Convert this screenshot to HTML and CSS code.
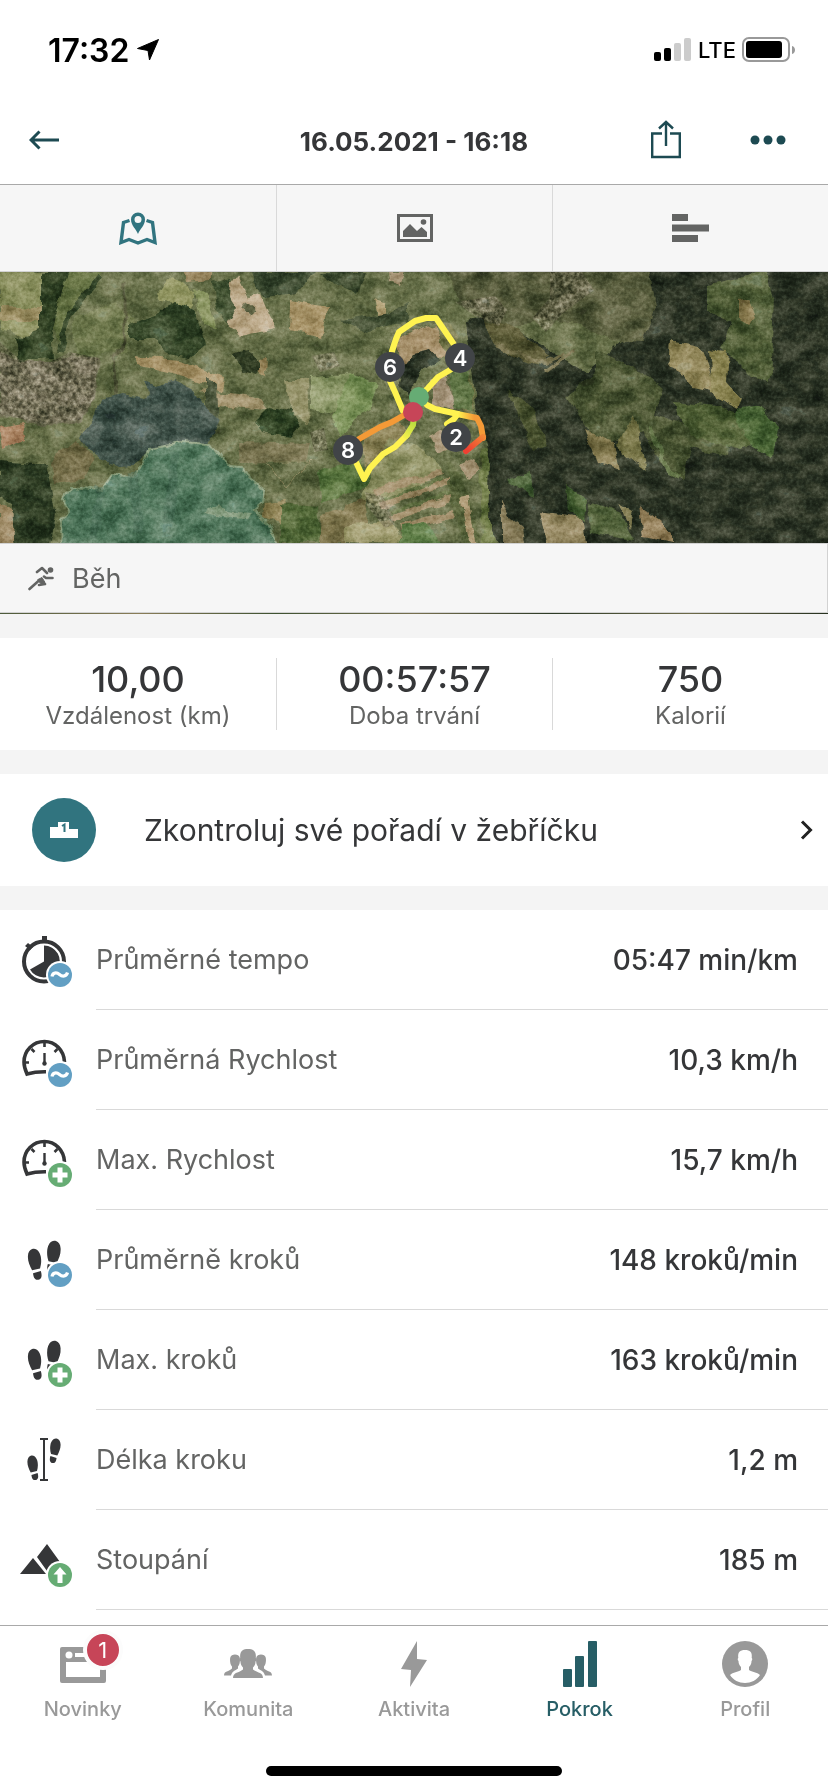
FILE: index.html
```html
<!DOCTYPE html>
<html lang="cs">
<head>
    <meta charset="UTF-8">
    <meta name="viewport" content="width=device-width, initial-scale=1.0">
    <title>16.05.2021 - 16:18</title>
    <link rel="stylesheet" href="styles.css">
</head>
<body>

    <!-- Shared icon parts -->
    <svg class="defs" aria-hidden="true">
        <symbol id="badge-avg" viewBox="0 0 28 28">
            <circle cx="14" cy="14" r="14" fill="#fff"/>
            <circle cx="14" cy="14" r="12" fill="#629fc3"/>
            <path d="M6 15.500c.6-4 4.500-4.500 7.500-2s7 2 8-2" fill="none" stroke="#fff" stroke-width="3.200"/>
        </symbol>
        <symbol id="badge-max" viewBox="0 0 28 28">
            <circle cx="14" cy="14" r="14" fill="#fff"/>
            <circle cx="14" cy="14" r="12" fill="#66ac74"/>
            <path d="M14 6.500v15M6.500 14h15" stroke="#fff" stroke-width="5"/>
        </symbol>
        <symbol id="badge-up" viewBox="0 0 28 28">
            <circle cx="14" cy="14" r="14" fill="#fff"/>
            <circle cx="14" cy="14" r="12" fill="#66ac74"/>
            <path d="M14 6l6.500 7.500h-4V22h-5v-8.500h-4z" fill="#fff"/>
        </symbol>
        <symbol id="gauge" viewBox="0 0 52 52">
            <path d="M44.500 26C44 14 35 5.500 24.500 5.500 13 5.500 4 14.500 4 26c0 4 1 7.500 3 12 6-1.700 12-2.300 19-2.200" transform="translate(0 2)" fill="none" stroke="#353638" stroke-width="3.600"/>
            <path d="M24.500 8v5M11.500 15l3 3M37.500 15l-3 3M5 28.500h4" stroke="#353638" stroke-width="2.600"/>
            <path d="M24.500 19v11" stroke="#353638" stroke-width="2.400"/>
            <circle cx="24.500" cy="29.500" r="2.200" fill="#353638"/>
        </symbol>
        <symbol id="foot" viewBox="0 0 16 34">
            <path d="M5 1c5-1.500 8 3 9 8 .8 5 .2 8.500-.8 12L5 23C2.500 18 .5 14 .7 8.500.8 4.500 2.500 1.800 5 1zM6 26l8-2.300c1.500 4.500 1 8.300-2.500 9C7.500 33.400 6.300 29.500 6 26z" fill="#353638"/>
        </symbol>
        <symbol id="steps" viewBox="0 0 52 52">
            <use href="#foot" x="7" y="14" width="16" height="33"/>
            <g transform="translate(49 5.500) scale(-1 1) rotate(2)"><use href="#foot" x="8" y="0" width="16" height="34"/></g>
        </symbol>
    </svg>

    <!-- Status bar -->
    <div class="status-bar">
        <div class="clock">
            17:32
            <svg width="22" height="22" viewBox="0 0 22 22"><path d="M21.500.5L12.500 21l-1.500-9.500L.5 9.500z" stroke="#000" stroke-linejoin="round"/></svg>
        </div>
        <div class="signal">
            <svg width="38" height="24" viewBox="0 0 38 24">
                <rect x="0" y="14" width="7" height="9" rx="2"/>
                <rect x="10" y="10" width="7" height="13" rx="2"/>
                <rect x="20" y="5" width="7" height="18" rx="2" fill="#ccc"/>
                <rect x="30" y="0" width="7" height="23" rx="2" fill="#ccc"/>
            </svg>
            LTE
            <svg width="54" height="26" viewBox="0 0 54 26">
                <rect x="1" y="1" width="46" height="23" rx="6" fill="none" stroke="#999" stroke-width="2"/>
                <rect x="4" y="4" width="36" height="17" rx="3"/>
                <path d="M50 9c4 1 4 7 0 8z" fill="#999"/>
            </svg>
        </div>
    </div>

    <header class="header">
        <button class="icon-button" aria-label="Zpět">
            <svg width="30" height="20" viewBox="0 0 30 20" fill="none" stroke="#1d4a52" stroke-width="3"><path d="M30 10H2M10.500 1.500L2 10l8.500 8.500"/></svg>
        </button>
        <h1>16.05.2021 - 16:18</h1>
        <div class="header-actions">
            <button class="icon-button" aria-label="Sdílet">
                <svg width="30" height="39" viewBox="0 0 30 39" fill="none" stroke="#1d4a52" stroke-width="2.400"><path d="M11 13.500H1.200V37h27.600V13.500H19"/><path d="M15 26V2M8 8.500L15 2l7 6.500"/></svg>
            </button>
            <button class="icon-button" aria-label="Více">
                <svg width="36" height="10" viewBox="0 0 36 10" fill="#1d4a52"><circle cx="5" cy="5" r="4.500"/><circle cx="18" cy="5" r="4.500"/><circle cx="31" cy="5" r="4.500"/></svg>
            </button>
        </div>
    </header>

    <nav class="view-tabs">
        <button aria-label="Mapa">
            <svg width="38" height="33" viewBox="0 0 38 33">
                <path d="M10.500 8.500L4.500 10.500 2 30.500l8-3 9 3.500 9-3.500 8 3L33.500 10.500l-6-2" fill="none" stroke="#31747f" stroke-width="3.400"/>
                <path d="M19 22c-1.800-5-7-8.500-7-14.500a7 7 0 0 1 14 0C26 13.500 20.800 17 19 22zM19 4a3.500 3.500 0 1 0 0 7 3.500 3.500 0 0 0 0-7z" fill="#31747f" fill-rule="evenodd"/>
            </svg>
        </button>
        <button aria-label="Fotografie">
            <svg width="36" height="28" viewBox="0 0 36 28">
                <rect x="1.500" y="1.500" width="33" height="25" fill="none" stroke="#636463" stroke-width="3"/>
                <path d="M6 23v-6l7-7 7 7 4.500-4 5.500 5v5z" fill="#636463"/>
                <circle cx="26.500" cy="8" r="2.800" fill="#636463"/>
            </svg>
        </button>
        <button aria-label="Grafy">
            <svg width="37" height="28" viewBox="0 0 37 28" fill="#636463"><path d="M0 0h16v7H0zM0 10.500h37v7H0zM0 21h26v7H0z"/></svg>
        </button>
    </nav>

    <!-- Satellite map with the route -->
    <svg class="map" viewBox="0 0 828 271" preserveAspectRatio="xMidYMid slice" role="img" aria-label="Mapa trasy">
        <defs>
            <filter id="terrain" x="0" y="0" width="100%" height="100%" color-interpolation-filters="sRGB">
                <feTurbulence type="fractalNoise" baseFrequency="0.06" numOctaves="3" seed="4" result="warp"/>
                <feDisplacementMap in="SourceGraphic" in2="warp" scale="9" xChannelSelector="R" yChannelSelector="G"/>
            </filter>
            <filter id="patches" x="0" y="0" width="100%" height="100%" color-interpolation-filters="sRGB">
                <feTurbulence type="fractalNoise" baseFrequency="0.04 0.06" numOctaves="5" seed="11"/>
                <feColorMatrix values="0 1.800 0 0 -.33  0 1.600 0 0 -.25  0 1.600 0 0 -.31  0 0 0 0 1"/>
            </filter>
            <filter id="grain" x="0" y="0" width="100%" height="100%" color-interpolation-filters="sRGB">
                <feTurbulence type="fractalNoise" baseFrequency="0.3" numOctaves="3" seed="2"/>
                <feColorMatrix values="0 1.200 0 0 -.1  0 1.200 0 0 -.1  0 1.200 0 0 -.1  0 0 0 0 1"/>
            </filter>
            <filter id="town" x="0" y="0" width="100%" height="100%" color-interpolation-filters="sRGB">
                <feTurbulence type="fractalNoise" baseFrequency="0.22" numOctaves="3" seed="8"/>
                <feColorMatrix values="0 2 0 0 -.56  0 1.900 0 0 -.54  0 1.800 0 0 -.54  0 0 0 0 1" result="n"/>
                <feComposite in="n" in2="SourceGraphic" operator="in"/>
            </filter>
            <linearGradient id="toOrange" gradientUnits="userSpaceOnUse" x1="458" y1="0" x2="474" y2="0"><stop offset="0" stop-color="#fff350"/><stop offset="1" stop-color="#f49a37"/></linearGradient>
            <linearGradient id="toRed" gradientUnits="userSpaceOnUse" x1="483" y1="162" x2="468" y2="178"><stop offset="0" stop-color="#f28a36"/><stop offset="1" stop-color="#ee4032"/></linearGradient>
            <linearGradient id="toLime" gradientUnits="userSpaceOnUse" x1="402" y1="168" x2="414" y2="150"><stop offset="0" stop-color="#fff350"/><stop offset="1" stop-color="#b9dc3f"/></linearGradient>
        </defs>

        <g filter="url(#terrain)">
            <rect x="-20" y="-20" width="880" height="320" fill="#636d4a"/>

            <!-- western fields and woods -->
            <path d="M0 0h45l-3 60-12 5-30-8z" fill="#858c5e"/>
            <path d="M0 35h40v14H0z" fill="#9a8e66"/>
            <path d="M65 0h38L70 45 60 75 52 55z" fill="#68764a"/>
            <path d="M100 5L68 42 60 80" fill="none" stroke="#33452b" stroke-width="6"/>
            <path d="M40 0h28l-8 30-8 25 2 32-36 2-3-22 25-8z" fill="#2b3d23"/>
            <path d="M75 45l40-15 20 20-10 30-50 5z" fill="#6c774f"/>
            <path d="M125 10v60l-12 15 4 40" fill="none" stroke="#55593f" stroke-width="3"/>
            <path d="M158 22l12-17 12 5 13 12-3 16-30-10z" fill="#8f9464"/>
            <path d="M183 0h28v8l-26 2z" fill="#9b8966"/>
            <path d="M155 42l20-12 20 8 10 34-15 13-27-5-10-14h-23V52z" fill="#2e4127"/>
            <path d="M195 18l12 2 10 38-14-6z" fill="#83905f"/>
            <path d="M213 10l16-5 2 22 7 10-10 18-12-20z" fill="#3a4c30"/>
            <path d="M230 8l9-2 9 20 12-4 15 34-35 7-13-10 10-17-8-12z" fill="#b8a689"/>
            <path d="M244 32l10 9" stroke="#5f6549" stroke-width="7"/>
            <path d="M252 0h65l-22 22-30 4-10-12z" fill="#364630"/>
            <path d="M290 29l38 6-6 31-33-8z" fill="#a8956e"/>
            <path d="M320 0h45l-8 22-24-12z" fill="#38472f"/>
            <path d="M374 27l12 4v16l-8-4z" fill="#af9f78"/>
            <path d="M388 0h18l-5 14-12-4z" fill="#a6957a"/>
            <path d="M340 48l45-6 22-10v18l-40 10z" fill="#404e36"/>
            <path d="M232 82l18-4 10 17-4 8-16-5z" fill="#2b3823"/>
            <path d="M258 86l8-1-1 20-7-3z" fill="#98865f"/>
            <path d="M135 84l45 4 45 17-2 14-40-14-46-12z" fill="#a28f68"/>
            <path d="M200 118l60 8 8 12-50-4z" fill="#9c8f6d"/>
            <path d="M205 105l12 8 2 45-14-24z" fill="#44503a"/>
            <path d="M310 105l40-5 20 18-30 25-30-5z" fill="#8d996e"/>
            <path d="M350 100l28 12-8 24-30 28-8-18z" fill="#7c935e"/>
            <path d="M285 108h22l2 44-18-10z" fill="#8d8c66"/>
            <path d="M255 150l15-15 20 3 11 16-11 12-28-5z" fill="#263a20"/>
            <path d="M240 170l72 2-4 17-66 2z" fill="#7a7656"/>
            <path d="M268 190h44M266 190l20 26 28-30" fill="none" stroke="#8f8a66" stroke-width="1"/>
            <path d="M318 200l44-12 10 26-50 16z" fill="#567340"/>
            <path d="M362 160l36-12 12 14-44 32z" fill="#8c845c"/>
            <path d="M264 230l24-2-8 24-18-6z" fill="#8b8056"/>
            <path d="M280 232l38 3 4 36h-42z" fill="#4b6336"/>
            <path d="M322 245l42-20 8 46h-52z" fill="#7f7752"/>
            <path d="M345 254l45-6 15 23h-60z" fill="#96946a"/>

            <!-- lakes -->
            <path d="M145 108l10 5 20-5 20 10 10 17 15 13-7 17-7 7-50 2-12 11-12 9-14 1-16-8-18-14-4-8 14-16 7-22 23-5 22 5 3-8z" fill="#40534e"/>
            <path d="M150 176l30-6 30 2 10 13 9 10 14 1 8 13 13 9-2 12-10 9 15 12 20 40H62l-1-41 7-10-5-14 8-11 30 3 12-16 20 4 10-14z" fill="#4e765f" stroke="#869b7e" stroke-width="2"/>
            <path d="M132 200l8 60M175 180l-8 85M100 215l-5 50" stroke="#456a59" stroke-width="9" opacity=".5"/>
            <path d="M205 242l15-10 6 8 26 2-4 6-26-2z" fill="#7b957a"/>

            <path d="M0 154l24-4 3 18-24 10z" fill="#a47e60"/>
            <path d="M0 188l46 4 6 30 4 22-8 40H14l-2-53-12-6z" fill="#273722"/>
            <path d="M0 232l12 3 3 46H0z" fill="#93805e"/>
            <path d="M50 190l26-22 20 18-12 20-30 4z" fill="#746e4d"/>
            <path d="M0 80l25 10 28 0 20-8 26 4-4 42-14 22-36 4-45-10z" fill="#6a6a53"/>

            <!-- fields under the route -->
            <path d="M398 66l38-14 12 35-16-4-14 8-18 4z" fill="#a38e6c"/>
            <path d="M436 46l14 6 22 60 6 50-14-20-16-50z" fill="#75784f"/>
            <path d="M402 98l12-16 18-4 8 10-22 14-10 20-10-8z" fill="#283226"/>
            <path d="M432 108l14-10 8 40-22-5z" fill="#a69680"/>
            <path d="M448 92l20 4 6 44-20-3z" fill="#60764a"/>
            <path d="M388 166l30 8 26 24-60 38-24-10z" fill="#8a8e64"/>
            <path d="M430 164l12-6 8 18-10 6zM458 194l14-8 8 12-12 10z" fill="#a59479"/>
            <path d="M375 220l68-20M380 234l70-26M392 246l66-22M400 256l60-16" stroke="#a08e6e" stroke-width="7"/>
            <path d="M384 228l60-22M392 240l60-20" stroke="#66754a" stroke-width="3"/>
            <path d="M402 254l22-4 28 31h-54z" fill="#587946"/>
            <path d="M448 185l16 28 20 68h-16l-18-54z" fill="#5c6842"/>
            <path d="M464 225l10 56" stroke="#b09d7c" stroke-width="6"/>
            <path d="M480 175l10 2 6 104h-14z" fill="#6c7a49"/>

            <!-- eastern forest -->
            <path d="M466 50l30-4 40 24 50 30 60-50 4-70h190v310H506l-18-40 2-60-14-60z" fill="#293226"/>
            <path d="M440-10l104 0 104 0 8 45-12 36-32-2-30-16-40-6-40 10-36-20z" fill="#53593d"/>
            <path d="M485 48l30 8 34 28-4 10-24-6-30-18z" fill="#535434"/>
            <path d="M495 72l50 20 20-12M545 100l30-22" fill="none" stroke="#6d6a4a" stroke-width="4"/>
            <path d="M596 78l46 22 20 16-6 26 24 8 50 10-2 24-38-8-6 32-20-16-22-32-34 12-20-14-20-34 28-24z" fill="#465233"/>
            <path d="M508 116l28 22 10 36-12 4-16-34z" fill="#434d2e"/>
            <path d="M708 12l40-8 18-8 8 30-4 84-18-4-20-20-10-10 10-28-24-8z" fill="#4a5936"/>
            <path d="M738 28l10-2 8 20-8 8-10-6z" fill="#857850"/>
            <path d="M670 70l30 6 12 32v12l-18-4-12-14-14-8z" fill="#877e54"/>
            <path d="M708 78l20 2-2 30 16 18-4 8-26-14z" fill="#827d4e"/>
            <path d="M672 130l46 4 22 6 20 30-20 8-50-14z" fill="#4b5c35"/>
            <path d="M738 136l22-4 16 24-4 30-20-12-16-24z" fill="#4b673a"/>
            <path d="M584 156l30 16 6 26-22-8z" fill="#827952"/>
            <path d="M634 142l12 56-30-24z" fill="#77764c"/>
            <path d="M650 156l18 42 12 6" fill="none" stroke="#60734a" stroke-width="4"/>
            <path d="M506 208l26-8 2 26z" fill="#405a34"/>
            <path d="M566 212l22 16-2 22-18-10z" fill="#3f5930"/>
            <path d="M590 230l30 10 14 28-42-6z" fill="#4a5c38"/>
            <path d="M502 226l8 18 14 12 4 25h-26z" fill="#857b5c"/>
            <path d="M540 240l42 6 6 35h-40z" fill="#918562"/>
            <path d="M618 230l16 10-4 16z" fill="#85805a"/>
            <path d="M640 235l32 24v12l-28-6z" fill="#907d5b"/>
        </g>

        <!-- built-up areas -->
        <g filter="url(#town)" opacity=".35">
            <path d="M0 70l20 18 30 2 20-10 28 6-4 40-14 22-36 4-44-10z"/>
            <path d="M550 0h32l12 18-32 24-16 18-14-14 18-20z"/>
            <path d="M455 30l40-6 12 14-8 16-24-10zM312 84l22-4 6 14-20 6zM310 160l14-4 4 22-14 2zM365 220l18 4 12 28-10 4-18-22z"/>
        </g>

        <rect class="map-patches" width="828" height="271" filter="url(#patches)"/>
        <rect class="map-grain" width="828" height="271" filter="url(#grain)"/>

        <g class="route">
            <path d="M419 125l8 8 8 4 23 5M457 143l-3 4-7 5"/>
            <path d="M419 125l9-9 10-11 12-7 10-12-7-15-17-25h-10l-11 3-16 11-3 7-4 12-2 16v14l5 11 8 19"/>
            <path d="M348 178l7 10 9 19 6-11 13-14 12-7 12-12"/>
            <path d="M406 164l7-11 1-8" stroke="url(#toLime)"/>
            <path d="M406 142l-14 8-12 5-21 12-9 9" stroke="#f49a37"/>
            <path d="M457 142l20 4 4 8 2 12" stroke="url(#toOrange)"/>
            <path d="M483 165l-17 14" stroke="url(#toRed)"/>
        </g>
        <circle cx="419" cy="125" r="10" fill="#66ac74"/>
        <circle cx="413" cy="140" r="10" fill="#c74558"/>
        <g fill="#414447">
            <circle cx="456" cy="165" r="15"/>
            <circle cx="460" cy="86" r="15"/>
            <circle cx="390" cy="95" r="15"/>
            <circle cx="348" cy="178" r="15"/>
        </g>
        <g class="km-label">
            <text x="456" y="173">2</text>
            <text x="460" y="94">4</text>
            <text x="390" y="103">6</text>
            <text x="348" y="186">8</text>
        </g>
    </svg>

    <div class="sport">
        <svg width="26" height="25" viewBox="0 0 26 25" fill="none" stroke="#636463" stroke-width="2.600" stroke-linecap="round" stroke-linejoin="round">
            <circle cx="22.500" cy="4" r="2.800" fill="#636463" stroke="none"/>
            <path d="M9 6l5-4 5 5M16 10.500l2 1.500h6.500M1.500 23L11 14.500l6 3.500-6 1"/>
            <path d="M10 13.500l4-2 3 5-4 1z" fill="#636463" stroke-width="1"/>
        </svg>
        <span>Běh</span>
    </div>
    <div class="map-edge"></div>

    <section class="summary">
        <div class="summary-item"><strong>10,00</strong><span>Vzdálenost (km)</span></div>
        <div class="summary-item"><strong>00:57:57</strong><span>Doba trvání</span></div>
        <div class="summary-item"><strong>750</strong><span>Kalorií</span></div>
    </section>

    <a href="#" class="leaderboard">
        <svg width="64" height="64" viewBox="0 0 64 64">
            <circle cx="32" cy="32" r="32" fill="#31747f"/>
            <path d="M18 29h8v-5h11v7h9v9H18z" fill="#fff"/>
            <path d="M30 28l2.500-1.500V34" fill="none" stroke="#31747f" stroke-width="2"/>
        </svg>
        <span>Zkontroluj své pořadí v žebříčku</span>
        <svg width="13" height="20" viewBox="0 0 13 20" fill="none" stroke="#222" stroke-width="3"><path d="M2 1.500l8.500 8.500L2 18.500"/></svg>
    </a>

    <!-- Workout details -->
    <ul class="details">
        <li>
            <svg viewBox="0 0 52 52">
                <circle cx="24" cy="27.500" r="20" fill="none" stroke="#353638" stroke-width="4"/>
                <path d="M22 2h5v6h-5zM5 12l3-3 5 4-3 3z" fill="#353638"/>
                <path d="M24 27.500v-16a16 16 0 1 1-14 24z" fill="#353638"/>
                <use href="#badge-avg" x="26" y="27" width="28" height="28"/>
            </svg>
            <div class="row"><span>Průměrné tempo</span><strong>05:47 min/km</strong></div>
        </li>
        <li>
            <svg viewBox="0 0 52 52"><use href="#gauge"/><use href="#badge-avg" x="26" y="27" width="28" height="28"/></svg>
            <div class="row"><span>Průměrná Rychlost</span><strong>10,3 km/h</strong></div>
        </li>
        <li>
            <svg viewBox="0 0 52 52"><use href="#gauge"/><use href="#badge-max" x="26" y="27" width="28" height="28"/></svg>
            <div class="row"><span>Max. Rychlost</span><strong>15,7 km/h</strong></div>
        </li>
        <li>
            <svg viewBox="0 0 52 52"><use href="#steps"/><use href="#badge-avg" x="26" y="27" width="28" height="28"/></svg>
            <div class="row"><span>Průměrně kroků</span><strong>148 kroků/min</strong></div>
        </li>
        <li>
            <svg viewBox="0 0 52 52"><use href="#steps"/><use href="#badge-max" x="26" y="27" width="28" height="28"/></svg>
            <div class="row"><span>Max. kroků</span><strong>163 kroků/min</strong></div>
        </li>
        <li>
            <svg viewBox="0 0 52 52">
                <use href="#foot" x="6" y="21" width="14" height="26"/>
                <g transform="translate(42 4) scale(-1 1)"><use href="#foot" width="14" height="26"/></g>
                <path d="M20 5h8M20 46h8M24 5v41" stroke="#353638" stroke-width="2"/>
            </svg>
            <div class="row"><span>Délka kroku</span><strong>1,2 m</strong></div>
        </li>
        <li>
            <svg viewBox="0 0 52 52">
                <path d="M0 40l13-16 13 16zM17 23l10-13 13 18-13 9z" fill="#353638"/>
                <use href="#badge-up" x="26" y="27" width="28" height="28"/>
            </svg>
            <div class="row"><span>Stoupání</span><strong>185 m</strong></div>
        </li>
    </ul>

    <nav class="tab-bar">
        <a href="#">
            <span class="tab-icon">
                <svg width="46" height="46" viewBox="0 0 46 46">
                    <path d="M2 6h42a2 2 0 0 1 2 2v32a2 2 0 0 1-2 2H2a2 2 0 0 1-2-2V8a2 2 0 0 1 2-2zm4 15v15h34V21z" fill-rule="evenodd"/>
                    <circle cx="9" cy="14" r="3.500" fill="#fff"/>
                    <path d="M15 12h26v4H15z" fill="#fff"/>
                </svg>
                <span class="count">1</span>
            </span>
            Novinky
        </a>
        <a href="#">
            <span class="tab-icon">
                <svg width="48" height="46" viewBox="0 0 48 46">
                    <path d="M9 37c0-6 6-5 10-8.500v-2c-2-2-2.500-4-2.500-6-1.500-1-1-3-.3-3.500C15.500 10 19 8 24 8s8.500 2 7.800 9c.7.500 1.200 2.500-.3 3.500 0 2-.5 4-2.500 6v2C33 32 39 31 39 37z"/>
                    <path d="M0 34.500c0-5 5-3.500 8-7v-2c-2-2-2.300-7-1.700-9 .7-4 8.700-4 9.400 0 .6 2 .3 7-1.700 9v2c-3 2-6 3-7 7zM48 34.500c0-5-5-3.500-8-7v-2c2-2 2.300-7 1.700-9-.7-4-8.700-4-9.400 0-.6 2-.3 7 1.700 9v2c3 2 6 3 7 7z"/>
                </svg>
            </span>
            Komunita
        </a>
        <a href="#">
            <span class="tab-icon"><svg width="26" height="46" viewBox="0 0 26 46"><path d="M16 0L0 28l10 1-1 17 17-27-10-1z"/></svg></span>
            Aktivita
        </a>
        <a href="#" class="active">
            <span class="tab-icon"><svg width="34" height="46" viewBox="0 0 34 46"><rect y="28" width="9" height="18" rx="1"/><rect x="12" y="15" width="9" height="31" rx="1"/><rect x="25" width="9" height="46" rx="1"/></svg></span>
            Pokrok
        </a>
        <a href="#">
            <span class="tab-icon">
                <svg width="46" height="46" viewBox="0 0 46 46">
                    <circle cx="23" cy="23" r="23"/>
                    <path d="M8 34c3-3 8-3 11-5v-3c-2-2-2.500-4-2.500-6-1-1-1-2.500-.2-3C15.500 11 18 9 23 9s7.500 2 6.700 8c.8.500.8 2 -.2 3 0 2-.5 4-2.500 6v3c3 2 8 2 11 5-3 5-9 8-15 8s-12-3-15-8z" fill="#fff"/>
                </svg>
            </span>
            Profil
        </a>
    </nav>
    <div class="home-indicator"></div>

</body>
</html>
```
FILE: styles.css
```css
* {
    box-sizing: border-box;
}

body {
    background-color: #fff;
    color: #353638;
    font-family: Inter, 'Liberation Sans', sans-serif;
    margin: 0;
    min-height: 100vh;
    display: flex;
    flex-direction: column;
}

svg {
    display: block;
    flex: none;
}

button {
    background: none;
    border: 0;
    padding: 0;
    cursor: pointer;
}

a {
    color: inherit;
    text-decoration: none;
}

.defs {
    display: none;
}

/* Status bar */
.status-bar {
    display: flex;
    justify-content: space-between;
    align-items: center;
    height: 100px;
    padding: 0 32px 0 48px;
    color: #000;
}

.clock {
    display: flex;
    align-items: center;
    gap: 8px;
    font-size: 32px;
    font-weight: 600;
}

.signal {
    display: flex;
    align-items: center;
    gap: 6px;
    font-size: 22px;
    font-weight: 500;
}

/* Header */
.header {
    display: grid;
    grid-template-columns: 1fr auto 1fr;
    align-items: center;
    height: 85px;
    padding: 0 29px 5px;
    border-bottom: 1px solid #a9a9a9;
}

.header h1 {
    margin: 0;
    padding-top: 4px;
    font-size: 26px;
    font-weight: 700;
}

.icon-button {
    justify-self: start;
}

.header-actions {
    display: flex;
    align-items: center;
    justify-content: flex-end;
    gap: 69px;
    padding-right: 13px;
}

.view-tabs {
    display: grid;
    grid-template-columns: repeat(3, 1fr);
    height: 87px;
    background-color: #f6f6f6;
    border-bottom: 1px solid #d2d2d2;
}

.view-tabs button {
    display: flex;
    align-items: center;
    justify-content: center;
}

.view-tabs button + button {
    border-left: 1px solid #d9d9d9;
}

/* Map */
.map {
    width: 100%;
    height: 271px;
}

.map-patches {
    mix-blend-mode: soft-light;
    opacity: .6;
}

.map-grain {
    mix-blend-mode: soft-light;
    opacity: .4;
}

.route path {
    fill: none;
    stroke-width: 6;
    stroke-linecap: round;
    stroke-linejoin: round;
}

.route path:not([stroke]) {
    stroke: #fff350;
}

.km-label {
    fill: #fff;
    font-size: 22px;
    font-weight: 600;
    text-anchor: middle;
}

.sport {
    display: flex;
    align-items: center;
    gap: 18px;
    height: 70px;
    padding-left: 28px;
    background-color: #f6f6f6;
    border: 1px solid #d2d2d2;
    border-left: 0;
    color: #636463;
    font-size: 27px;
}

.map-edge {
    height: 1px;
    background: linear-gradient(90deg, #4c5a3a, #8a7d58, #3e5231, #77704f, #2c3a26, #6d6a48, #26311f);
}

/* Summary */
.summary {
    display: grid;
    grid-template-columns: repeat(3, 1fr);
    padding: 20px 0;
    border-top: 24px solid #f4f4f4;
    border-bottom: 24px solid #f4f4f4;
}

.summary-item {
    display: flex;
    flex-direction: column;
    align-items: center;
    height: 72px;
}

.summary-item + .summary-item {
    border-left: 1px solid #d9d9d9;
}

.summary-item strong {
    font-size: 36px;
    font-weight: 500;
    line-height: 43px;
}

.summary-item span {
    color: #636463;
    font-size: 24px;
    line-height: 30px;
}

.leaderboard {
    display: flex;
    align-items: center;
    gap: 48px;
    height: 136px;
    padding: 0 15px 0 32px;
    border-bottom: 24px solid #f4f4f4;
    font-size: 30px;
}

.leaderboard span {
    flex: 1;
}

/* Workout details */
.details {
    flex: 1;
    list-style: none;
    margin: 0;
    padding: 0;
}

.details li {
    display: flex;
    align-items: center;
    gap: 24px;
    padding-left: 20px;
}

.details svg {
    width: 52px;
    height: 52px;
    overflow: visible;
}

.row {
    flex: 1;
    display: flex;
    align-items: center;
    justify-content: space-between;
    height: 100px;
    padding-right: 30px;
    border-bottom: 1px solid #d9d9d9;
    color: #636463;
    font-size: 27px;
}

.row strong {
    color: #353638;
    font-size: 28px;
    font-weight: 500;
}

/* Bottom navigation */
.tab-bar {
    display: grid;
    grid-template-columns: repeat(5, 1fr);
    padding-top: 15px;
    border-top: 1px solid #a9a9a9;
    color: #999;
    font-size: 20px;
    font-weight: 500;
    line-height: 24px;
}

.tab-bar a {
    display: flex;
    flex-direction: column;
    align-items: center;
    gap: 10px;
}

.tab-bar svg {
    fill: currentColor;
}

.tab-bar .active {
    color: #275e66;
}

.tab-icon {
    position: relative;
}

.count {
    position: absolute;
    top: -11px;
    left: 23px;
    width: 40px;
    height: 40px;
    border: 4px solid #fcfcfc;
    border-radius: 50%;
    background-color: #c74558;
    color: #fff;
    font-size: 22px;
    font-weight: 400;
    line-height: 32px;
    text-align: center;
}

.home-indicator {
    width: 296px;
    height: 10px;
    margin: 45px auto 16px;
    border-radius: 5px;
    background-color: #000;
}
```
